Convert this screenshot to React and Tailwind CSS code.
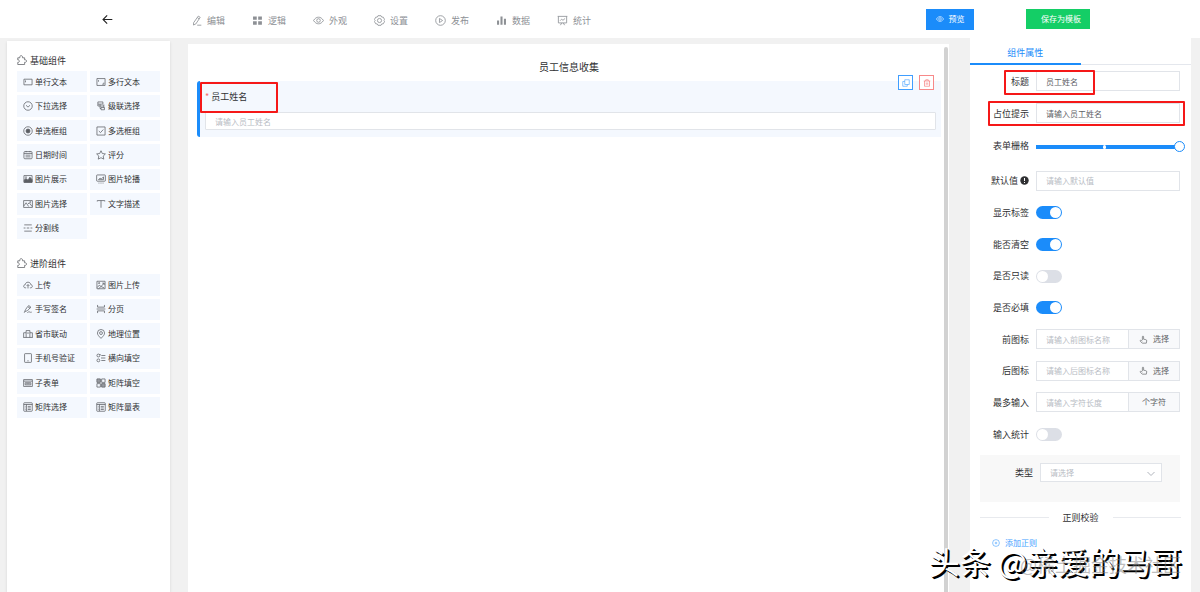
import React from "react";

const paths = {
  pencil: <><path d="M10.6 1.6 13.4 3.4 7 13 3.6 14.6 3.8 11.2Z" /><path d="M9.3 3.8l2.6 1.8M9 14.8h6" /></>,
  grid: <g fill="currentColor" stroke="none"><path d="M1.5 2h5.400v5H1.500zM9 2h5.400v5H9zM1.500 9.200h5.400v5H1.500zM9 9.200h5.400v5H9z" /></g>,
  eye: <><path d="M.8 8C3 4.600 5.300 3.200 8 3.200S13 4.600 15.200 8C13 11.400 10.700 12.800 8 12.800S3 11.400.8 8Z" /><circle cx="8" cy="8" r="2.600" /></>,
  gear: <><path d="M5.800 1h4.400l1 2 2.300.2 2 3.600L14.300 8l1.200 1.200-2 3.600-2.300.2-1 2H5.800l-1-2-2.300-.2-2-3.600L1.700 8 .5 6.800l2-3.600L4.800 3Z" /><circle cx="8" cy="8" r="3" /></>,
  play: <><circle cx="8" cy="8" r="7" /><path d="M6.500 5v6l4.500-3Z" /></>,
  bars: <g fill="currentColor" stroke="none"><path d="M1.500 8h3v6h-3zM6.500 2h3v12h-3zM11.500 5.500h3V14h-3z" /></g>,
  board: <><path d="M1 2h14M2 2v9.500h12V2M5 14.800l1.800-3.300M11 14.800 9.200 11.500M4.500 8.300l2.200-2.200 2 1.600L11.800 5" /></>,
  puzzle: <path d="M1.200 4.500h3.300c-1-4.600 5.400-4.600 4.400 0h3.300v3.300c4.200-.8 4.200 4.600 0 3.800v3.600H1.200v-3.400c3.400.6 3.400-4.600 0-4Z" />,
  input: <><path d="M1.500 3.500h13v9h-13z" /><path d="M4 5.500v3" /></>,
  textarea: <><path d="M1.500 2.500h13v11h-13z" /><path d="M4 5v2.500M12.500 9v2.500H10" /></>,
  down: <><circle cx="8" cy="8" r="6.800" /><path d="m4.800 6.800 3.200 3 3.200-3" /></>,
  cascade: <><path d="M3 1.500h8v3.500H3zM6.500 8h6M6.500 8V5M12.500 5.500v5M8 10.500h5.500v3.500H8zM3 5v3h3.500v4H8" /></>,
  radio: <><circle cx="8" cy="8" r="6.800" /><circle cx="8" cy="8" r="3.200" fill="currentColor" /></>,
  check: <><path d="M1.500 1.500h13v13h-13z" /><path d="m4.500 8 2.700 2.600 4.500-5" /></>,
  calendar: <><rect x="1.500" y="2.500" width="13" height="11.500" rx="1.500" /><path d="M1.500 5.500h13M4 8.200h8M4 11h8M5 1.500v2M11 1.500v2" /></>,
  star: <path d="m8 1.200 2.100 4.400 4.900.7-3.500 3.400.9 4.900L8 12.300l-4.400 2.300.9-4.900L1 6.300l4.900-.7Z" />,
  photo: <><path d="M1.500 2.500h13v11h-13z" /><path d="M2 13V9.500L5 7l3 3 3-5 3.500 4v4Z" fill="currentColor" /><circle cx="4.800" cy="5" r=".7" /></>,
  carousel: <><rect x="1" y="1.500" width="14" height="10" rx="1" /><path d="M4 9l2.500-2.500L8.500 8 12 4.500V9ZM4 14.500h1.500M7.200 14.500h1.600M10.500 14.500H12" /></>,
  picture: <><path d="M1 2.500h14v11H1z" /><path d="m1.500 11 3.500-5 4 6M8 8l2-2 4.500 6" /><circle cx="11.500" cy="4.800" r=".7" /></>,
  text: <path d="M2 4V2.500h12V4M8 2.500v11.500" />,
  lines: <path d="M2 3h12M1 8h3M6 8h4M12 8h3M2 13h12" />,
  cloud: <path d="M5 12.500H3.800C.2 12.500.2 7.800 3.500 7.500 4 2.200 12 2.200 12.500 7.500c3.300.3 3.300 5-.3 5H11M8 13.500V7.500M5.800 9.500 8 7.300l2.200 2.200" />,
  imageUp: <><path d="M1.500 2h13v12h-13z" /><path d="m2 12 3.500-4 2.500 2.500L13 5M10 5h3v3M4 14l4-3.500 5 2" /><circle cx="5" cy="5" r="1" /></>,
  sign: <path d="M2 14c1-3 2-6 7-11.500l3.500 2.300C9 10 6 11.500 3 12M8 4.500l3.300 2.300M7 14c2-3 2.500 0 4-1.500.6 1 1.500.8 3 .5" />,
  page: <path d="M2.500 1.500V5h11V1.500M2.500 14.500V11h11v3.500M1 8h14" />,
  city: <path d="M5 13.500v-11h6v11M1 13.500V6h4M11 6h4v7.500M.5 13.500h15M8 5v3" />,
  pin: <><path d="M8 15C4.500 11.500 2.300 9.200 2.300 6.500a5.700 5.700 0 0 1 11.400 0C13.700 9.200 11.500 11.500 8 15Z" /><circle cx="8" cy="6.500" r="2.300" /></>,
  phone: <><rect x="2.500" y="1" width="11" height="14" rx="1" /><path d="M7 12.500h2" /></>,
  fill: <><circle cx="3.800" cy="4" r="2.300" /><circle cx="3.800" cy="11.800" r="2.300" /><path d="M5.500 2.500h2M8.500 4H15M8 8h7M8.500 12H15" /></>,
  form: <><path d="M1 2.500h14v11H1z" /><path d="M1 5h14M3.500 7.500h9v3.500h-9zM5 9.200h6" /></>,
  matrix: <><path d="M1.500 1.500H7V7H1.500zM9 1.500h5.500V7H9zM1.500 9H7v5.500H1.500zM9 9h5.500v5.500H9z" /><path d="M2 2h4.500v4.500H2zM9.500 9.500H14V14H9.500z" fill="currentColor" opacity=".6" /></>,
  table: <><rect x="1.200" y="1.200" width="13.600" height="13.600" rx="1" /><path d="M1.200 4H15M5.500 4v10.500M7.500 7h5M7.500 9.500h5M7.500 12h5M3 7h1M3 9.500h1M3 12h1" /></>,
  hand: <path d="M6 9V3.200c0-1.600 2.200-1.600 2.200 0V7.500l4 .8c1.200.3 1.700 1 1.500 2.200L13 14.500H5.800L2.300 11c-.8-1.200.5-2.200 1.600-1.400L6 11" />,
  copy: <><path d="M5.500 1.500h9v9.500h-9z" /><path d="M5.500 5h-4v9.500h9V11" /></>,
  trash: <path d="M1.500 4h13M5.500 4V1.500h5V4M3 4v10.500h10V4M6.500 7v4.500M9.500 7v4.500" />,
  plus: <><circle cx="8" cy="8" r="6.800" /><path d="M8 5.500v5M5.500 8h5" /></>,
  arrow: <path d="M15 8H1.500M7.500 2l-6 6 6 6" strokeWidth="1.600" />,
};

function Icon({ name, className = "size-[10px] text-[#5c5f64]" }) {
  return (
    <svg viewBox="0 0 16 16" fill="none" stroke="currentColor" strokeWidth="1.200" aria-hidden="true" className={`shrink-0 ${className}`}>
      {paths[name]}
    </svg>
  );
}

const nav = [
  ["pencil", "编辑"], ["grid", "逻辑"], ["eye", "外观"], ["gear", "设置"],
  ["play", "发布"], ["bars", "数据"], ["board", "统计"],
];
const basic = [
  ["input", "单行文本"], ["textarea", "多行文本"], ["down", "下拉选择"], ["cascade", "级联选择"],
  ["radio", "单选框组"], ["check", "多选框组"], ["calendar", "日期时间"], ["star", "评分"],
  ["photo", "图片展示"], ["carousel", "图片轮播"], ["picture", "图片选择"], ["text", "文字描述"],
  ["lines", "分割线"],
];
const advanced = [
  ["cloud", "上传"], ["imageUp", "图片上传"], ["sign", "手写签名"], ["page", "分页"],
  ["city", "省市联动"], ["pin", "地理位置"], ["phone", "手机号验证"], ["fill", "横向填空"],
  ["form", "子表单"], ["matrix", "矩阵填空"], ["table", "矩阵选择"], ["table", "矩阵量表"],
];

function Palette({ title, items, height }) {
  return (
    <section>
      <h2 className="flex h-[22px] items-center gap-[3px] text-[9px] text-[#303133]">
        <Icon name="puzzle" />
        {title}
      </h2>
      <div className={`grid auto-rows-fr grid-cols-2 gap-[3px] ${height}`}>
        {items.map(([icon, text]) => (
          <button key={text} type="button" className="flex min-h-0 items-center gap-[2px] bg-[#f4f8fe] pl-[6px] text-[8px] text-[#303133]">
            <Icon name={icon} />
            {text}
          </button>
        ))}
      </div>
    </section>
  );
}

function Row({ id, label, tip, mark, children }) {
  return (
    <div className="relative flex min-w-0 items-center gap-[7px] pr-[11px]">
      <label htmlFor={id} className="flex w-[59px] shrink-0 items-center justify-end gap-[2px] text-[9px] text-[#303133]">
        {label}
        {tip && (
          <svg viewBox="0 0 16 16" className="size-[9px]" aria-hidden="true">
            <circle cx="8" cy="8" r="7.500" fill="#303133" />
            <path d="M8 3.500v5.500M8 10.800v1.800" stroke="#fff" strokeWidth="1.800" />
          </svg>
        )}
      </label>
      {children}
      {mark && <span className={`pointer-events-none absolute rounded-[1px] border-2 border-[#f51818] ${mark}`} />}
    </div>
  );
}

const field = "h-5 w-0 min-w-0 flex-1 border border-[#e1e4e9] bg-white px-[9px] text-[8px] text-[#606266] outline-none placeholder:text-[#b8bcc4]";

function Toggle({ id, on }) {
  return (
    <input
      id={id}
      type="checkbox"
      role="switch"
      defaultChecked={on}
      className="mt-px h-[13px] w-[26px] appearance-none rounded-full bg-[#dcdfe6] before:m-px before:block before:size-[11px] before:rounded-full before:bg-white checked:bg-[#1b8cfa] checked:before:ml-[14px]"
    />
  );
}

function Pick() {
  return (
    <button type="button" className="-ml-[8px] flex h-5 w-[52px] shrink-0 items-center justify-center gap-[5px] border border-[#e1e4e9] bg-[#f8f9fb] text-[8px] text-[#606266]">
      <Icon name="hand" className="size-[9px]" />
      选择
    </button>
  );
}

export default function App() {
  return (
    <div className="relative flex min-h-screen flex-col bg-[#f1f1f1] font-['Noto_Sans_CJK_SC','Noto_Sans',sans-serif] leading-none">
      <header className="flex h-[38px] shrink-0 items-center bg-white pr-[110px] pl-[102px]">
        <button type="button" aria-label="返回" className="text-[#222]">
          <Icon name="arrow" className="size-[11px]" />
        </button>
        <nav className="ml-[78px] flex gap-[27px] pt-[2px] text-[9px]">
          {nav.map(([icon, text]) => (
            <a key={text} href="#" className="flex items-center gap-[5px] text-[#8d9095]">
              <Icon name={icon} className="size-[11px]" />
              {text}
            </a>
          ))}
        </nav>
        <div className="ml-auto flex gap-[52px] text-[8px] text-white">
          <button type="button" className="flex h-[21px] w-12 items-center justify-center gap-[5px] bg-[#1b8cfa]">
            <Icon name="eye" className="size-[8px]" />
            预览
          </button>
          <button type="button" className="h-[20px] w-16 bg-[#14ce66] pl-[6px]">保存为模板</button>
        </div>
      </header>

      <div className="flex flex-1 pr-[9px] pl-[7px]">
        <aside className="mt-[3px] flex w-[163px] shrink-0 flex-col gap-[13px] bg-white pt-[8px] pr-[10px] pl-[10px] shadow-sm">
          <Palette title="基础组件" items={basic} height="h-[168px]" />
          <Palette title="进阶组件" items={advanced} height="h-[144px]" />
        </aside>

        <main className="mt-[6px] ml-[18px] flex min-w-0 flex-1 bg-white pr-px">
          <div className="flex-1 pr-[3px] pl-[9px]">
            <h1 className="pt-[18px] pb-[9px] text-center text-[10px] text-[#303133]">员工信息收集</h1>
            <div className="relative rounded-l-[3px] border-l-[3px] border-[#1b8cfa] bg-[#f4f8fe] pr-[5px] pb-[7px] pl-[5px]">
              <label htmlFor="name" className="flex h-[31px] items-center gap-[2px] text-[9px] text-[#303133]">
                <span className="text-[#f56c6c]">*</span>
                员工姓名
              </label>
              <input id="name" placeholder="请输入员工姓名" className="block h-[18px] w-full rounded-[1px] border border-[#e1e4e9] bg-white px-[9px] text-[8px] text-[#606266] outline-none placeholder:text-[#b8bcc4]" />
              <span className="pointer-events-none absolute top-px left-0 h-[31px] w-[78px] rounded-[1px] border-2 border-[#f51818]" />
              <div className="absolute -top-[6px] right-[7px] flex gap-[6px]">
                <button type="button" aria-label="复制" className="flex size-[15px] items-center justify-center border border-[#409eff] bg-white text-[#409eff]">
                  <Icon name="copy" className="size-[8px]" />
                </button>
                <button type="button" aria-label="删除" className="flex size-[15px] items-center justify-center border border-[#f78989] bg-white text-[#f56c6c]">
                  <Icon name="trash" className="size-[8px]" />
                </button>
              </div>
            </div>
          </div>
          <div className="mt-[3px] w-[4px] rounded-t-full bg-[#d2d2d2]" />
        </main>

        <aside className="ml-[21px] flex w-[221px] shrink-0 flex-col bg-white">
          <div className="flex h-[27px] shrink-0 items-end border-b border-[#e4e7ed]">
            <button type="button" className="-mb-px h-full w-1/2 border-b-2 border-[#1b8cfa] pt-[2px] text-[9px] text-[#1b8cfa]">组件属性</button>
          </div>
          <div className="grid h-[97px] grid-cols-1 grid-rows-3">
            <Row id="title" label="标题" mark="top-[5px] left-[34px] h-[25px] w-[91px]">
              <input id="title" defaultValue="员工姓名" className={field} />
            </Row>
            <Row id="hint" label="占位提示" mark="top-[4px] left-[18px] h-[25px] w-[197px]">
              <input id="hint" defaultValue="请输入员工姓名" className={field} />
            </Row>
            <Row id="span" label="表单栅格">
              <div className="relative -mr-[5px] flex flex-1 items-center pt-[2px]">
                <input
                  id="span"
                  type="range"
                  min="0"
                  max="24"
                  defaultValue="24"
                  className="h-[4px] w-full appearance-none bg-linear-to-r from-[#1b8cfa] from-97% to-transparent to-97% [&::-webkit-slider-thumb]:size-[11px] [&::-webkit-slider-thumb]:appearance-none [&::-webkit-slider-thumb]:rounded-full [&::-webkit-slider-thumb]:border [&::-webkit-slider-thumb]:border-[#1b8cfa] [&::-webkit-slider-thumb]:bg-white"
                />
                <span className="pointer-events-none absolute left-[45%] h-[4px] w-[3px] rounded-full bg-white" />
              </div>
            </Row>
          </div>
          <div className="mt-[3px] grid h-[285px] auto-rows-fr grid-cols-1">
            <Row id="def" label="默认值" tip>
              <input id="def" placeholder="请输入默认值" className={field} />
            </Row>
            <Row id="showLabel" label="显示标签"><Toggle id="showLabel" on /></Row>
            <Row id="clearable" label="能否清空"><Toggle id="clearable" on /></Row>
            <Row id="readonly" label="是否只读"><Toggle id="readonly" /></Row>
            <Row id="required" label="是否必填"><Toggle id="required" on /></Row>
            <Row id="prefix" label="前图标">
              <input id="prefix" placeholder="请输入前图标名称" className={field} />
              <Pick />
            </Row>
            <Row id="suffix" label="后图标">
              <input id="suffix" placeholder="请输入后图标名称" className={field} />
              <Pick />
            </Row>
            <Row id="max" label="最多输入">
              <input id="max" placeholder="请输入字符长度" className={field} />
              <span className="-ml-[8px] flex h-5 w-[52px] shrink-0 items-center justify-center border border-[#e1e4e9] bg-[#f8f9fb] text-[8px] text-[#606266]">个字符</span>
            </Row>
            <Row id="count" label="输入统计"><Toggle id="count" /></Row>
          </div>
          <div className="mr-[11px] ml-[10px] mt-[5px] flex h-[47px] items-start gap-[7px] bg-[#f8f8f8] pt-[8px] pr-[18px]">
            <label htmlFor="type" className="flex h-[19px] w-[53px] items-center justify-end text-[9px] text-[#303133]">类型</label>
            <div className="relative flex flex-1">
              <select id="type" className="h-[19px] w-full appearance-none border border-[#e1e4e9] bg-white px-[9px] text-[8px] text-[#b8bcc4]">
                <option>请选择</option>
              </select>
              <svg viewBox="0 0 8 8" fill="none" stroke="#b0b4bc" className="pointer-events-none absolute top-[7px] right-[7px] size-[8px]" aria-hidden="true">
                <path d="M.5 2 4 5.500 7.500 2" />
              </svg>
            </div>
          </div>
          <div className="mx-[10px] mt-[11px] flex items-center gap-[14px] text-[9px] text-[#303133]">
            <span className="h-px flex-1 bg-[#e8eaee]" />
            正则校验
            <span className="h-px flex-1 bg-[#e8eaee]" />
          </div>
          <button type="button" className="mt-[17px] ml-[22px] flex items-center gap-[5px] self-start text-[8px] text-[#409eff]">
            <Icon name="plus" className="size-[8px]" />
            添加正则
          </button>
        </aside>
      </div>

      <p className="pointer-events-none absolute right-[18px] bottom-[16px] text-[31px] whitespace-nowrap text-white [text-shadow:1px_1px_0_#000,2px_2px_0_#000]">头条 @亲爱的马哥</p>
      <p className="pointer-events-none absolute right-[19px] bottom-[19px] text-[18px] whitespace-nowrap text-[#7d7d7d]/50">@稀土掘金技术社区</p>
    </div>
  );
}
